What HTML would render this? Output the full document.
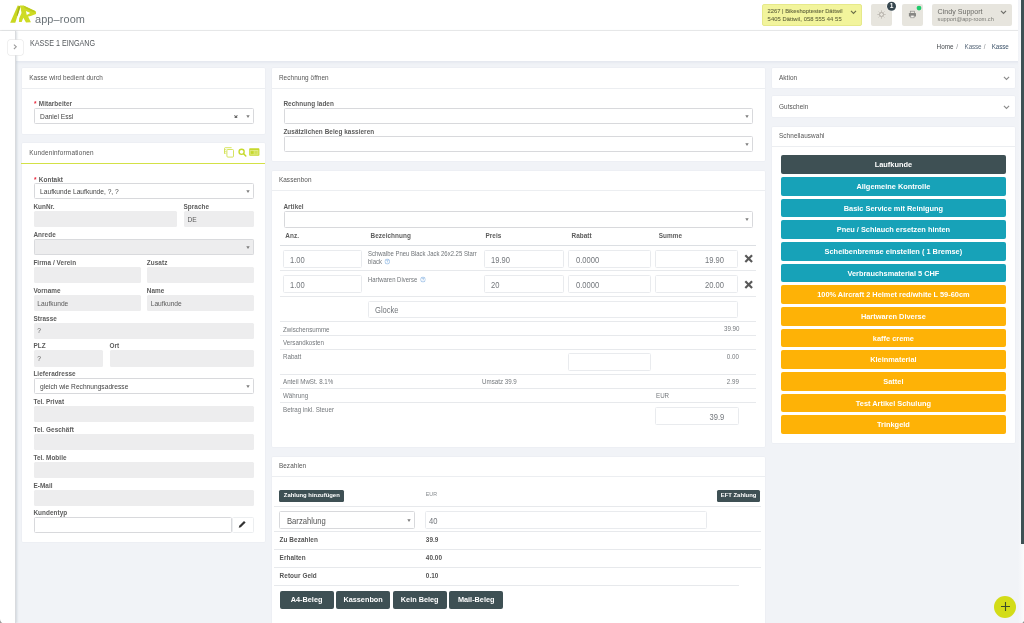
<!DOCTYPE html><html lang="de"><head><meta charset="utf-8"><title>Kasse 1 Eingang</title><style>
*{box-sizing:border-box;margin:0;padding:0}
html,body{width:1024px;height:623px;overflow:hidden}
body{position:relative;will-change:transform;background:#f1f3f7;font-family:"Liberation Sans",sans-serif;font-size:6.4px;color:#4a4a4a;line-height:1}
.a{position:absolute;white-space:nowrap}
.card{position:absolute;background:#fff;border-radius:1px;box-shadow:0 0 0 0.5px #e9ecf1}
.ch{position:absolute;left:0;right:0;top:0;border-bottom:1px solid #eef0f3}
.t{position:absolute;white-space:nowrap;transform:translateY(-50%);line-height:1}
.b{font-weight:bold;color:#5c5c5c;letter-spacing:0.06px}
.inp{position:absolute;background:#fff;border:1px solid #d8d9dc;border-radius:1.5px}
.dis{position:absolute;background:#ededee;border-radius:1.5px}
.hl{position:absolute;height:1px;background:#e7e9ec}
.btn{position:absolute;border-radius:2px;color:#fff;text-align:center;font-size:7.4px;font-weight:bold}
.arr{position:absolute;width:0;height:0;border-left:1.9px solid transparent;border-right:1.9px solid transparent;border-top:2.7px solid #777}
.big{font-size:8.4px;color:#73777c}
</style></head><body>
<div class="a" style="left:0;top:0;width:1024px;height:31px;background:#fff;border-bottom:1px solid #e9e9e9"></div>
<svg class="a" style="left:9px;top:4px" width="30" height="22" viewBox="9 4 30 22">
<polygon points="10.2,22.8 15.3,22.8 20.6,6.2 17.7,5.5" fill="#c9d720"/>
<polygon points="18.6,6.6 20.6,6.2 17.6,15.8 16.6,15.6" fill="#a3b01b"/>
<path fill-rule="evenodd" d="M19.6 5.4 L23.4 5.6 L35.6 11.3 Q36.4 12.6 36 14.1 L30.8 16 L28.1 16.5 L30.9 22.2 L26 22.5 L23.3 17.8 L21.7 22 L18.9 21.9 L19.2 18.3 L21.5 13 L20.4 6.4 Z M25.9 11 L30.2 13.1 L26.8 14.9 Z" fill="#cedb24"/>
<polygon points="23.4,5.6 35.6,11.3 34.2,12.6 25,8.2" fill="#bccb1e"/>
</svg>
<div class="t" style="left:35.3px;top:19.5px;font-size:11.2px;color:#6a7277;letter-spacing:0.1px;transform:translateY(-50%) scaleX(0.978);transform-origin:left center">app–room</div>
<div class="a" style="left:762px;top:4.2px;width:99.8px;height:21.4px;background:#f2f49c;border-radius:2px;border:0.5px solid #e6e98a"></div>
<div class="t" style="left:767.6px;top:11.6px;font-size:5.8px;color:#686b42;-webkit-text-stroke:0.1px #686b42">2267 | Bikeshoptester Dättwil</div>
<div class="t" style="left:767.6px;top:19.6px;font-size:5.8px;letter-spacing:0.07px;color:#686b42;-webkit-text-stroke:0.1px #686b42">5405 Dättwil, 058 555 44 55</div>
<svg class="a" style="left:849.5px;top:9.5px" width="7" height="5" viewBox="0 0 7 5"><path d="M1 0.9 L3.5 3.4 L6 0.9" fill="none" stroke="#6a6d48" stroke-width="1.15"/></svg>
<div class="a" style="left:871px;top:4.2px;width:21.2px;height:21.4px;background:#e7e5de;border-radius:2px"></div>
<svg class="a" style="left:876.9px;top:9.5px" width="9" height="9" viewBox="0 0 9 9"><circle cx="4.5" cy="4.5" r="2" fill="none" stroke="#a39e97" stroke-width="0.8"/>
<g stroke="#a39e97" stroke-width="0.7"><path d="M4.5 0.5V1.7M4.5 7.3V8.5M0.5 4.5H1.7M7.3 4.5H8.5M1.7 1.7L2.5 2.5M6.5 6.5L7.3 7.3M1.7 7.3L2.5 6.5M6.5 2.5L7.3 1.7"/></g></svg>
<svg class="a" style="left:886px;top:1px" width="11" height="11" viewBox="0 0 11 11"><circle cx="5.5" cy="5.3" r="5" fill="#fff"/><circle cx="5.5" cy="5.3" r="4.5" fill="#37474f"/></svg>
<div class="t" style="left:889.7px;top:6.3px;font-size:6.6px;color:#fff;font-weight:bold">1</div>
<div class="a" style="left:901.8px;top:4.2px;width:21.2px;height:21.4px;background:#e7e5de;border-radius:2px"></div>
<svg class="a" style="left:908px;top:10px" width="9" height="9" viewBox="908 10 9 9"><rect x="910.3" y="11.2" width="4.3" height="2.2" fill="#e7e5de" stroke="#8f8f8b" stroke-width="0.7"/><rect x="908.9" y="12.9" width="7.1" height="3.7" rx="0.6" fill="#878784"/><rect x="910.8" y="15.2" width="3.3" height="2.6" fill="#f4f3ef" stroke="#878784" stroke-width="0.6"/></svg>
<svg class="a" style="left:916px;top:4.6px" width="6" height="6" viewBox="0 0 6 6"><circle cx="3" cy="3.1" r="2.4" fill="#1fcb6c"/></svg>
<div class="a" style="left:932.4px;top:4.2px;width:80px;height:21.4px;background:#e7e5de;border-radius:2px"></div>
<div class="t" style="left:937.6px;top:12.5px;font-size:7.1px;color:#6a6a66">Cindy Support</div>
<div class="t" style="left:937.6px;top:20.2px;font-size:5.65px;color:#7b7b76">support@app-room.ch</div>
<svg class="a" style="left:1000.4px;top:9.8px" width="7" height="5" viewBox="0 0 7 5"><path d="M1 0.9 L3.5 3.4 L6 0.9" fill="none" stroke="#6d6d68" stroke-width="1.15"/></svg>
<div class="a" style="left:15px;top:31px;width:1006px;height:30px;background:#fff;box-shadow:0 1px 3px rgba(200,208,222,0.45)"></div>
<div class="t" style="left:29.9px;top:43.1px;font-size:8.5px;color:#54585c;transform:translateY(-50%) scaleX(0.845);transform-origin:left center">KASSE 1 EINGANG</div>
<div class="t" style="left:936.6px;top:47.2px;font-size:6.3px;color:#45494d;letter-spacing:0px">Home</div>
<div class="t" style="left:956.3px;top:47.2px;font-size:6.3px;color:#8a8e92;letter-spacing:0px">/</div>
<div class="t" style="left:964.6px;top:47.2px;font-size:6.3px;color:#5b6b7c;letter-spacing:-0.12px">Kasse</div>
<div class="t" style="left:983.8px;top:47.2px;font-size:6.3px;color:#8a8e92;letter-spacing:0px">/</div>
<div class="t" style="left:991.7px;top:47.2px;font-size:6.3px;color:#3f556b;letter-spacing:-0.12px">Kasse</div>
<div class="a" style="left:0;top:31px;width:15.6px;height:592px;background:#fff;border-right:1px solid #d9dbde;box-shadow:1px 0 2px rgba(150,160,175,0.35)"></div>
<div class="a" style="left:8.2px;top:40.3px;width:15px;height:14.4px;background:#fff;border-radius:2px;box-shadow:0 0 0 0.5px #e4e4e4,0 0 2px rgba(0,0,0,0.06)"></div>
<svg class="a" style="left:13.2px;top:44px" width="4.4" height="5.6" viewBox="0 0 4.4 5.6"><path d="M0.9 0.6 L3.3 2.8 L0.9 5" fill="none" stroke="#9a9a9a" stroke-width="1.05"/></svg>
<div class="card" style="left:22px;top:68.2px;width:242.8px;height:65.8px"></div>
<div class="hl" style="left:22px;top:87.5px;width:242.8px;background:#eceef1"></div>
<div class="t" style="left:29.2px;top:78.1px;color:#555;letter-spacing:0.08px">Kasse wird bedient durch</div>
<div class="t b" style="left:33.9px;top:104.2px"><span style="color:#e8273b;margin-right:0.5px">*</span> Mitarbeiter</div>
<div class="inp" style="left:33.5px;top:108.2px;width:220.1px;height:16.2px"></div>
<div class="t" style="left:40.1px;top:116.6px;font-size:6.65px;color:#444;">Daniel Essl</div>
<svg class="a" style="left:245.55px;top:114.90px" width="4" height="3.2" viewBox="0 0 4 3.2"><path d="M0.3 0.3H3.7L2 2.9Z" fill="#7d7d7d"/></svg>
<svg class="a" style="left:233.9px;top:114.6px" width="3.8" height="3.8" viewBox="0 0 4 4"><path d="M0.4 0.4L3.6 3.6M3.6 0.4L0.4 3.6" stroke="#6a6a6a" stroke-width="1.1"/></svg>
<div class="card" style="left:22px;top:142.8px;width:242.8px;height:399.0px"></div>
<div class="t" style="left:29.2px;top:152.9px;color:#555;letter-spacing:0.08px"><span style="letter-spacing:0.2px">Kundeninformationen</span></div>
<div class="a" style="left:20.6px;top:162.6px;width:244.6px;height:1.2px;background:#d3e146"></div>
<svg class="a" style="left:224px;top:146.9px" width="11" height="11" viewBox="0 0 11 11"><g fill="none" stroke="#cbdd3a" stroke-width="0.8"><path d="M0.5 6.8V1.5Q0.5 0.7 1.3 0.7H7.6"/><path d="M0.5 2.6H2.4M0.5 4.4H2.4M0.5 6.2H2.4" stroke-width="0.6"/><rect x="2.9" y="2.5" width="6.6" height="7.6" rx="1" fill="#fff"/></g></svg>
<svg class="a" style="left:237px;top:147px" width="11" height="11" viewBox="0 0 11 11"><circle cx="4.6" cy="4.8" r="2.55" fill="none" stroke="#c6da2c" stroke-width="1.35"/><path d="M6.6 6.8L8.8 9" stroke="#c6da2c" stroke-width="1.5" stroke-linecap="round"/></svg>
<svg class="a" style="left:249px;top:148.3px" width="11" height="8" viewBox="0 0 11 8"><rect x="0.2" y="0.2" width="10.2" height="7.6" rx="0.8" fill="#c6d82c"/><rect x="1.2" y="2" width="8.2" height="4.8" fill="#e3ec8e"/><path d="M2 3.2h2.4v2.6H2zM5.4 3.4h3.2M5.4 4.6h3.2M5.4 5.8h3.2" stroke="#c6d82c" stroke-width="0.6" fill="#c6d82c"/></svg>
<div class="t b" style="left:33.9px;top:179.70000000000002px"><span style="color:#e8273b;margin-right:0.5px">*</span> Kontakt</div>
<div class="inp" style="left:33.5px;top:183.3px;width:220.1px;height:16.2px"></div>
<div class="t" style="left:40.1px;top:191.7px;font-size:6.65px;color:#444;">Laufkunde Laufkunde, ?, ?</div>
<svg class="a" style="left:245.55px;top:190.00px" width="4" height="3.2" viewBox="0 0 4 3.2"><path d="M0.3 0.3H3.7L2 2.9Z" fill="#7d7d7d"/></svg>
<div class="t b" style="left:33.4px;top:207.24px">KunNr.</div>
<div class="dis" style="left:33.5px;top:211.1px;width:143.7px;height:16.4px"></div>
<div class="t b" style="left:183.5px;top:207.24px">Sprache</div>
<div class="dis" style="left:183.6px;top:211.1px;width:70.0px;height:16.4px"></div>
<div class="t" style="left:187.4px;top:220.0px;color:#5a5a5a;font-size:6.65px">DE</div>
<div class="t b" style="left:33.4px;top:235.08px">Anrede</div>
<div class="dis" style="left:33.5px;top:239.0px;width:220.1px;height:16.4px"></div>
<svg class="a" style="left:245.55px;top:245.68px" width="4" height="3.2" viewBox="0 0 4 3.2"><path d="M0.3 0.3H3.7L2 2.9Z" fill="#7d7d7d"/></svg>
<div class="a" style="left:33.5px;top:239.0px;width:220.1px;height:16.2px;border:1px solid #d9dadd;border-radius:1.5px"></div>
<div class="t b" style="left:33.4px;top:262.91999999999996px">Firma / Verein</div>
<div class="dis" style="left:33.5px;top:266.8px;width:107.3px;height:16.4px"></div>
<div class="t b" style="left:146.8px;top:262.91999999999996px">Zusatz</div>
<div class="dis" style="left:146.9px;top:266.8px;width:106.7px;height:16.4px"></div>
<div class="t b" style="left:33.4px;top:290.76px">Vorname</div>
<div class="dis" style="left:33.5px;top:294.7px;width:107.3px;height:16.4px"></div>
<div class="t" style="left:37.3px;top:303.6px;color:#5a5a5a;font-size:6.65px">Laufkunde</div>
<div class="t b" style="left:146.8px;top:290.76px">Name</div>
<div class="dis" style="left:146.9px;top:294.7px;width:106.7px;height:16.4px"></div>
<div class="t" style="left:150.7px;top:303.6px;color:#5a5a5a;font-size:6.65px">Laufkunde</div>
<div class="t b" style="left:33.4px;top:318.59999999999997px">Strasse</div>
<div class="dis" style="left:33.5px;top:322.5px;width:220.1px;height:16.4px"></div>
<div class="t" style="left:37.3px;top:331.4px;color:#5a5a5a;font-size:6.65px">?</div>
<div class="t b" style="left:33.4px;top:346.44px">PLZ</div>
<div class="dis" style="left:33.5px;top:350.3px;width:69.9px;height:16.4px"></div>
<div class="t" style="left:37.3px;top:359.2px;color:#5a5a5a;font-size:6.65px">?</div>
<div class="t b" style="left:109.5px;top:346.44px">Ort</div>
<div class="dis" style="left:109.6px;top:350.3px;width:144.0px;height:16.4px"></div>
<div class="t b" style="left:33.4px;top:374.28px">Lieferadresse</div>
<div class="inp" style="left:33.5px;top:378.2px;width:220.1px;height:16.2px"></div>
<div class="t" style="left:40.1px;top:386.6px;font-size:6.65px;color:#444;">gleich wie Rechnungsadresse</div>
<svg class="a" style="left:245.55px;top:384.88px" width="4" height="3.2" viewBox="0 0 4 3.2"><path d="M0.3 0.3H3.7L2 2.9Z" fill="#7d7d7d"/></svg>
<div class="t b" style="left:33.4px;top:402.11999999999995px">Tel. Privat</div>
<div class="dis" style="left:33.5px;top:406.0px;width:220.1px;height:16.4px"></div>
<div class="t b" style="left:33.4px;top:429.96px">Tel. Geschäft</div>
<div class="dis" style="left:33.5px;top:433.9px;width:220.1px;height:16.4px"></div>
<div class="t b" style="left:33.4px;top:457.79999999999995px">Tel. Mobile</div>
<div class="dis" style="left:33.5px;top:461.7px;width:220.1px;height:16.4px"></div>
<div class="t b" style="left:33.4px;top:485.64px">E-Mail</div>
<div class="dis" style="left:33.5px;top:489.5px;width:220.1px;height:16.4px"></div>
<div class="t b" style="left:33.4px;top:513.48px">Kundentyp</div>
<div class="inp" style="left:33.5px;top:517.4px;width:198.1px;height:16px"></div>
<div class="inp" style="left:232.3px;top:517.4px;width:21.3px;height:16px;border-color:#eceef0"></div>
<svg class="a" style="left:237.8px;top:520.4px" width="8.6" height="8.6" viewBox="0 0 7 7"><path d="M0.6 6.4L1 4.7L4.9 0.8L6.2 2.1L2.3 6Z" fill="#333"/></svg>
<div class="card" style="left:271.7px;top:68.2px;width:493.5px;height:93.1px"></div>
<div class="hl" style="left:271.7px;top:87.5px;width:493.5px;background:#eceef1"></div>
<div class="t" style="left:278.9px;top:78.1px;color:#555;letter-spacing:0.08px">Rechnung öffnen</div>
<div class="t b" style="left:283.4px;top:104.2px">Rechnung laden</div>
<div class="inp" style="left:283.5px;top:108.2px;width:469.3px;height:16.2px"></div>
<svg class="a" style="left:744.75px;top:114.90px" width="4" height="3.2" viewBox="0 0 4 3.2"><path d="M0.3 0.3H3.7L2 2.9Z" fill="#7d7d7d"/></svg>
<div class="t b" style="left:283.4px;top:131.8px">Zusätzlichen Beleg kassieren</div>
<div class="inp" style="left:283.5px;top:136.4px;width:469.3px;height:16.1px"></div>
<svg class="a" style="left:744.75px;top:143.05px" width="4" height="3.2" viewBox="0 0 4 3.2"><path d="M0.3 0.3H3.7L2 2.9Z" fill="#7d7d7d"/></svg>
<div class="card" style="left:271.7px;top:171px;width:493.5px;height:276.2px"></div>
<div class="hl" style="left:271.7px;top:190.4px;width:493.5px;background:#eceef1"></div>
<div class="t" style="left:278.9px;top:180.3px;color:#555;letter-spacing:0.08px">Kassenbon</div>
<div class="t b" style="left:283.4px;top:206.8px">Artikel</div>
<div class="inp" style="left:283.5px;top:211.4px;width:469.3px;height:16.2px"></div>
<svg class="a" style="left:744.75px;top:218.10px" width="4" height="3.2" viewBox="0 0 4 3.2"><path d="M0.3 0.3H3.7L2 2.9Z" fill="#7d7d7d"/></svg>
<div class="t b" style="left:285.3px;top:235.8px">Anz.</div>
<div class="t b" style="left:370.5px;top:235.8px">Bezeichnung</div>
<div class="t b" style="left:485.5px;top:235.8px">Preis</div>
<div class="t b" style="left:571.5px;top:235.8px">Rabatt</div>
<div class="t b" style="left:658.7px;top:235.8px">Summe</div>
<div class="hl" style="left:280.3px;top:244.7px;width:475.7px;background:#dcdfe3"></div>
<div class="inp" style="left:282.5px;top:249.8px;width:79.8px;height:17.8px;border-color:#e9ebee"></div>
<div class="t big" style="left:289.7px;top:259.6px;transform:translateY(-50%) scaleX(0.905);transform-origin:left center">1.00</div>
<div class="inp" style="left:483.5px;top:249.8px;width:80.5px;height:17.8px;border-color:#e9ebee"></div>
<div class="t big" style="left:490.7px;top:259.6px;transform:translateY(-50%) scaleX(0.905);transform-origin:left center">19.90</div>
<div class="inp" style="left:568.2px;top:249.8px;width:82.8px;height:17.8px;border-color:#e9ebee"></div>
<div class="t big" style="left:576.0px;top:259.6px;transform:translateY(-50%) scaleX(0.905);transform-origin:left center">0.0000</div>
<div class="inp" style="left:655.4px;top:249.8px;width:82.8px;height:17.8px;border-color:#e9ebee"></div>
<div class="t big" style="right:300.0px;top:259.6px;transform:translateY(-50%) scaleX(0.905);transform-origin:right center">19.90</div>
<svg class="a" style="left:744px;top:254.2px" width="9.4" height="9.4" viewBox="0 0 10 10"><path d="M1.4 1.4L8.6 8.6M8.6 1.4L1.4 8.6" stroke="#595959" stroke-width="2.3"/></svg>
<div class="inp" style="left:282.5px;top:275.4px;width:79.8px;height:17.8px;border-color:#e9ebee"></div>
<div class="t big" style="left:289.7px;top:285.2px;transform:translateY(-50%) scaleX(0.905);transform-origin:left center">1.00</div>
<div class="inp" style="left:483.5px;top:275.4px;width:80.5px;height:17.8px;border-color:#e9ebee"></div>
<div class="t big" style="left:490.7px;top:285.2px;transform:translateY(-50%) scaleX(0.905);transform-origin:left center">20</div>
<div class="inp" style="left:568.2px;top:275.4px;width:82.8px;height:17.8px;border-color:#e9ebee"></div>
<div class="t big" style="left:576.0px;top:285.2px;transform:translateY(-50%) scaleX(0.905);transform-origin:left center">0.0000</div>
<div class="inp" style="left:655.4px;top:275.4px;width:82.8px;height:17.8px;border-color:#e9ebee"></div>
<div class="t big" style="right:300.0px;top:285.2px;transform:translateY(-50%) scaleX(0.905);transform-origin:right center">20.00</div>
<svg class="a" style="left:744px;top:279.8px" width="9.4" height="9.4" viewBox="0 0 10 10"><path d="M1.4 1.4L8.6 8.6M8.6 1.4L1.4 8.6" stroke="#595959" stroke-width="2.3"/></svg>
<div class="t" style="left:367.8px;top:253.6px;color:#707478;font-size:6.5px;transform:translateY(-50%) scaleX(0.915);transform-origin:left center">Schwalbe Pneu Black Jack 26x2.25 Starr</div>
<div class="t" style="left:367.8px;top:261.6px;color:#707478;font-size:6.5px;transform:translateY(-50%) scaleX(0.915);transform-origin:left center">black <svg style="display:inline-block;vertical-align:-0.6px;margin-left:1px" width="6.2" height="6.2" viewBox="0 0 8 8"><circle cx="4" cy="4" r="3.3" fill="none" stroke="#6ea4dc" stroke-width="0.8"/><path d="M3 3Q3 2 4 2Q5 2 5 3Q5 3.7 4 4.2V4.8M4 5.6V6.3" stroke="#6ea4dc" stroke-width="0.8" fill="none"/></svg></div>
<div class="t" style="left:367.8px;top:280px;color:#707478;font-size:6.5px;transform:translateY(-50%) scaleX(0.915);transform-origin:left center">Hartwaren Diverse <svg style="display:inline-block;vertical-align:-0.6px;margin-left:1px" width="6.2" height="6.2" viewBox="0 0 8 8"><circle cx="4" cy="4" r="3.3" fill="none" stroke="#6ea4dc" stroke-width="0.8"/><path d="M3 3Q3 2 4 2Q5 2 5 3Q5 3.7 4 4.2V4.8M4 5.6V6.3" stroke="#6ea4dc" stroke-width="0.8" fill="none"/></svg></div>
<div class="hl" style="left:280.3px;top:269.9px;width:475.7px"></div>
<div class="hl" style="left:280.3px;top:295.7px;width:475.7px"></div>
<div class="inp" style="left:368.2px;top:300.6px;width:370.2px;height:17.8px;border-color:#e9ebee"></div>
<div class="t big" style="left:375.0px;top:310.4px;transform:translateY(-50%) scaleX(0.905);transform-origin:left center">Glocke</div>
<div class="hl" style="left:280.3px;top:320.9px;width:475.7px"></div>
<div class="t" style="left:282.8px;top:329.5px;color:#74787c;font-size:6.6px;transform:translateY(-50%) scaleX(0.94);transform-origin:left center">Zwischensumme</div>
<div class="t" style="right:284.8px;top:329.0px;color:#74787c;font-size:6.6px;transform:translateY(-50%) scaleX(0.94);transform-origin:right center">39.90</div>
<div class="hl" style="left:280.3px;top:334.8px;width:475.7px"></div>
<div class="t" style="left:282.8px;top:343.2px;color:#74787c;font-size:6.6px;transform:translateY(-50%) scaleX(0.94);transform-origin:left center">Versandkosten</div>
<div class="hl" style="left:280.3px;top:348.6px;width:475.7px"></div>
<div class="t" style="left:282.8px;top:357.0px;color:#74787c;font-size:6.6px;transform:translateY(-50%) scaleX(0.94);transform-origin:left center">Rabatt</div>
<div class="t" style="right:284.8px;top:356.5px;color:#74787c;font-size:6.6px;transform:translateY(-50%) scaleX(0.94);transform-origin:right center">0.00</div>
<div class="inp" style="left:568.4px;top:353.3px;width:82.8px;height:18px;border-color:#e9ebee"></div>
<div class="hl" style="left:280.3px;top:374.0px;width:475.7px"></div>
<div class="t" style="left:282.8px;top:382.1px;color:#74787c;font-size:6.6px;transform:translateY(-50%) scaleX(0.94);transform-origin:left center">Anteil MwSt. 8.1%</div>
<div class="t" style="left:482.4px;top:382.1px;color:#74787c;font-size:6.6px;transform:translateY(-50%) scaleX(0.94);transform-origin:left center">Umsatz 39.9</div>
<div class="t" style="right:284.8px;top:381.6px;color:#74787c;font-size:6.6px;transform:translateY(-50%) scaleX(0.94);transform-origin:right center">2.99</div>
<div class="hl" style="left:280.3px;top:387.7px;width:475.7px"></div>
<div class="t" style="left:282.8px;top:396.3px;color:#74787c;font-size:6.6px;transform:translateY(-50%) scaleX(0.94);transform-origin:left center">Währung</div>
<div class="t" style="left:656px;top:396.3px;color:#74787c;font-size:6.6px;transform:translateY(-50%) scaleX(0.94);transform-origin:left center">EUR</div>
<div class="hl" style="left:280.3px;top:401.6px;width:475.7px"></div>
<div class="t" style="left:282.8px;top:410.3px;color:#74787c;font-size:6.6px;transform:translateY(-50%) scaleX(0.94);transform-origin:left center">Betrag inkl. Steuer</div>
<div class="inp" style="left:655.4px;top:407.4px;width:83.4px;height:17.4px;border-color:#e9ebee"></div>
<div class="t big" style="right:299.4px;top:417.0px;transform:translateY(-50%) scaleX(0.905);transform-origin:right center">39.9</div>
<div class="card" style="left:271.7px;top:456.7px;width:493.5px;height:183.3px"></div>
<div class="hl" style="left:271.7px;top:476.3px;width:493.5px;background:#eceef1"></div>
<div class="t" style="left:278.9px;top:466.0px;color:#555;letter-spacing:0.08px">Bezahlen</div>
<div class="btn" style="left:279.2px;top:490.1px;width:65.2px;height:11.8px;background:#3e5054;font-size:5.9px;line-height:11.8px;border-radius:1.5px">Zahlung hinzufügen</div>
<div class="btn" style="left:717px;top:490.2px;width:43.2px;height:11.8px;background:#3e5054;font-size:5.9px;line-height:11.8px;border-radius:1.5px">EFT Zahlung</div>
<div class="t" style="left:425.8px;top:494.9px;color:#85898d;font-size:5.3px">EUR</div>
<div class="hl" style="left:273.5px;top:505.7px;width:487.9px"></div>
<div class="inp" style="left:279.2px;top:511.2px;width:136.2px;height:17.4px"></div>
<div class="t" style="left:286.8px;top:520.5px;font-size:8.4px;color:#555;transform:translateY(-50%) scaleX(0.915);transform-origin:left center">Barzahlung</div>
<svg class="a" style="left:407.35px;top:518.50px" width="4" height="3.2" viewBox="0 0 4 3.2"><path d="M0.3 0.3H3.7L2 2.9Z" fill="#7d7d7d"/></svg>
<div class="inp" style="left:425.3px;top:511.2px;width:282.1px;height:17.4px;border-color:#e9ebee"></div>
<div class="t big" style="left:429.1px;top:520.8px;transform:translateY(-50%) scaleX(0.905);transform-origin:left center">40</div>
<div class="hl" style="left:273.5px;top:530.9px;width:487.9px"></div>
<div class="t b" style="left:279.6px;top:539.8px;color:#555">Zu Bezahlen</div>
<div class="t b" style="left:425.8px;top:539.8px;color:#555">39.9</div>
<div class="t b" style="left:279.6px;top:558.2px;color:#555">Erhalten</div>
<div class="t b" style="left:425.8px;top:558.2px;color:#555">40.00</div>
<div class="t b" style="left:279.6px;top:576.4px;color:#555">Retour Geld</div>
<div class="t b" style="left:425.8px;top:576.4px;color:#555">0.10</div>
<div class="hl" style="left:273.5px;top:548.7px;width:487.9px"></div>
<div class="hl" style="left:273.5px;top:566.9px;width:487.9px"></div>
<div class="hl" style="left:273.5px;top:584.9px;width:465.9px"></div>
<div class="btn" style="left:279.5px;top:590.5px;width:54.2px;height:18.4px;line-height:18.4px;background:#3e5054;font-size:7.3px">A4-Beleg</div>
<div class="btn" style="left:336px;top:590.5px;width:54.2px;height:18.4px;line-height:18.4px;background:#3e5054;font-size:7.3px">Kassenbon</div>
<div class="btn" style="left:392.6px;top:590.5px;width:54.2px;height:18.4px;line-height:18.4px;background:#3e5054;font-size:7.3px">Kein Beleg</div>
<div class="btn" style="left:449.1px;top:590.5px;width:54.2px;height:18.4px;line-height:18.4px;background:#3e5054;font-size:7.3px">Mail-Beleg</div>
<div class="card" style="left:771.8px;top:68.2px;width:243.4px;height:19.4px"></div>
<div class="t" style="left:779.0px;top:78.1px;color:#555;letter-spacing:0.08px">Aktion</div>
<svg class="a" style="left:1003.3px;top:75.9px" width="7" height="5" viewBox="0 0 7 5"><path d="M0.9 0.9 L3.5 3.5 L6.1 0.9" fill="none" stroke="#8a8a8a" stroke-width="1.1"/></svg>
<div class="card" style="left:771.8px;top:96.3px;width:243.4px;height:20.8px"></div>
<div class="t" style="left:779.0px;top:106.9px;color:#555;letter-spacing:0.08px">Gutschein</div>
<svg class="a" style="left:1003.3px;top:104.60000000000001px" width="7" height="5" viewBox="0 0 7 5"><path d="M0.9 0.9 L3.5 3.5 L6.1 0.9" fill="none" stroke="#8a8a8a" stroke-width="1.1"/></svg>
<div class="card" style="left:771.8px;top:126.6px;width:243.4px;height:316.0px"></div>
<div class="hl" style="left:771.8px;top:145.6px;width:243.4px;background:#eceef1"></div>
<div class="t" style="left:779.0px;top:135.9px;color:#555;letter-spacing:0.08px">Schnellauswahl</div>
<div class="btn" style="left:780.9px;top:155.40px;width:225px;height:18.6px;line-height:19.6px;background:#3e5054">Laufkunde</div>
<div class="btn" style="left:780.9px;top:177.07px;width:225px;height:18.6px;line-height:19.6px;background:#17a2b8">Allgemeine Kontrolle</div>
<div class="btn" style="left:780.9px;top:198.74px;width:225px;height:18.6px;line-height:19.6px;background:#17a2b8">Basic Service mit Reinigung</div>
<div class="btn" style="left:780.9px;top:220.41px;width:225px;height:18.6px;line-height:19.6px;background:#17a2b8">Pneu / Schlauch ersetzen hinten</div>
<div class="btn" style="left:780.9px;top:242.08px;width:225px;height:18.6px;line-height:19.6px;background:#17a2b8">Scheibenbremse einstellen ( 1 Bremse)</div>
<div class="btn" style="left:780.9px;top:263.75px;width:225px;height:18.6px;line-height:19.6px;background:#17a2b8">Verbrauchsmaterial 5 CHF</div>
<div class="btn" style="left:780.9px;top:285.42px;width:225px;height:18.6px;line-height:19.6px;background:#feb206">100% Aircraft 2 Helmet red/white L 59-60cm</div>
<div class="btn" style="left:780.9px;top:307.09px;width:225px;height:18.6px;line-height:19.6px;background:#feb206">Hartwaren Diverse</div>
<div class="btn" style="left:780.9px;top:328.76px;width:225px;height:18.6px;line-height:19.6px;background:#feb206">kaffe creme</div>
<div class="btn" style="left:780.9px;top:350.43px;width:225px;height:18.6px;line-height:19.6px;background:#feb206">Kleinmaterial</div>
<div class="btn" style="left:780.9px;top:372.10px;width:225px;height:18.6px;line-height:19.6px;background:#feb206">Sattel</div>
<div class="btn" style="left:780.9px;top:393.77px;width:225px;height:18.6px;line-height:19.6px;background:#feb206">Test Artikel Schulung</div>
<div class="btn" style="left:780.9px;top:415.44px;width:225px;height:18.6px;line-height:19.6px;background:#feb206">Trinkgeld</div>
<div class="a" style="left:1018px;top:0;width:6px;height:623px;background:linear-gradient(90deg,#f1f3f7,#fafbfc)"></div>
<div class="a" style="left:1021px;top:0;width:3px;height:544px;background:#3e5154"></div>
<div class="a" style="left:994px;top:595.5px;width:22px;height:22px;border-radius:50%;background:#d3dc18"></div>
<svg class="a" style="left:999.5px;top:601px" width="11" height="11" viewBox="0 0 11 11"><path d="M5.5 1V10M1 5.5H10" stroke="#3a4a2a" stroke-width="1.1"/></svg>
<svg class="a" style="left:0;top:618.5px" width="4.5" height="4.5" viewBox="0 0 6 6"><path d="M0 0A6 6 0 0 0 6 6H0Z" fill="#9a9a9a"/></svg>
<svg class="a" style="left:1019.5px;top:618.5px" width="4.5" height="4.5" viewBox="0 0 6 6"><path d="M6 0A6 6 0 0 1 0 6H6Z" fill="#8a8a8a"/></svg>
</body></html>
